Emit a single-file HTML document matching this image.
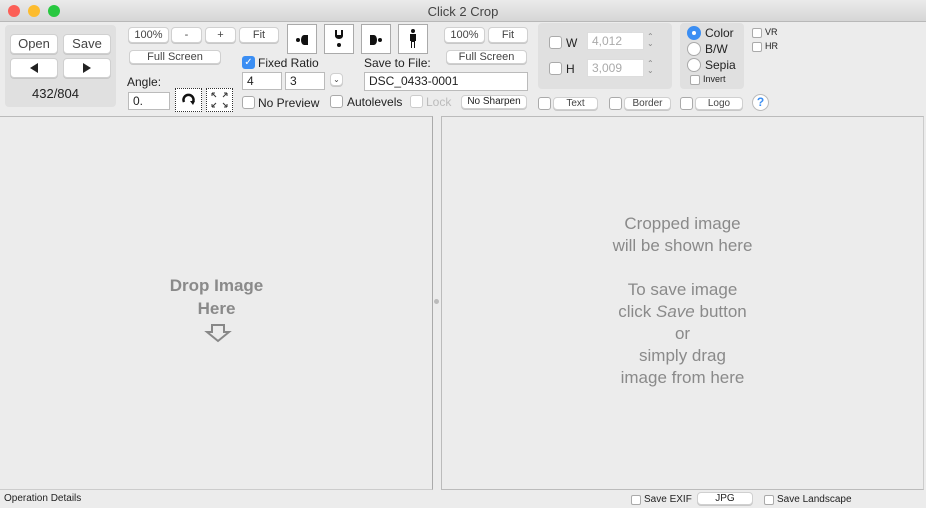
<!DOCTYPE html><html><head><style>
*{box-sizing:border-box;margin:0;padding:0}
body{width:926px;height:508px;background:#ececec;font-family:"Liberation Sans",sans-serif;position:relative;overflow:hidden;font-size:12px;color:#222}
.a{position:absolute}
.btn{position:absolute;background:#fff;border:1px solid #d0d0d0;border-radius:4px;box-shadow:0 1px 0 #c8c8c8;text-align:center;color:#444;font-size:11px}
.cb{position:absolute;width:13px;height:13px;border:1px solid #aaa;border-radius:3px;background:#fff}
.tf{position:absolute;background:#fff;border:1px solid #bbb;font-size:12px;padding-left:4px}
.grp{position:absolute;background:#e0e0e0;border-radius:4px}
.rd{position:absolute;width:14px;height:14px;border-radius:50%;border:1px solid #aaa;background:#fff}
.ico{position:absolute;width:30px;height:30px;background:#fff;border:1px solid #aaa}
.t{position:absolute;white-space:nowrap}
</style></head><body>
<div class="a" style="left:0;top:0;width:926px;height:22px;background:linear-gradient(#ebebeb,#d6d6d6);border-bottom:1px solid #b8b8b8"></div>
<div class="a" style="left:8px;top:5px;width:12px;height:12px;border-radius:50%;background:#fc5f57"></div>
<div class="a" style="left:28px;top:5px;width:12px;height:12px;border-radius:50%;background:#fdbc2e"></div>
<div class="a" style="left:48px;top:5px;width:12px;height:12px;border-radius:50%;background:#28c840"></div>
<div class="t" style="left:0;width:926px;top:4px;text-align:center;font-size:13px;color:#444">Click 2 Crop</div>

<div class="grp" style="left:5px;top:25px;width:111px;height:82px"></div>
<div class="btn" style="left:10px;top:34px;width:48px;height:20px;font-size:13px;line-height:18px">Open</div>
<div class="btn" style="left:63px;top:34px;width:48px;height:20px;font-size:13px;line-height:18px">Save</div>
<div class="btn" style="left:10px;top:58px;width:48px;height:20px;line-height:18px"><svg width="10" height="10" style="margin-top:4px"><path d="M1 5L9 0V10Z" fill="#222"/></svg></div>
<div class="btn" style="left:63px;top:58px;width:48px;height:20px;line-height:18px"><svg width="10" height="10" style="margin-top:4px"><path d="M9 5L1 0V10Z" fill="#222"/></svg></div>
<div class="t" style="left:32px;top:86px;font-size:13px">432/804</div>

<div class="btn" style="left:128px;top:27px;width:41px;height:16px;line-height:14px">100%</div>
<div class="btn" style="left:171px;top:27px;width:31px;height:16px;line-height:14px">-</div>
<div class="btn" style="left:205px;top:27px;width:31px;height:16px;line-height:14px">+</div>
<div class="btn" style="left:239px;top:27px;width:40px;height:16px;line-height:14px">Fit</div>
<div class="btn" style="left:129px;top:50px;width:92px;height:14px;line-height:12px">Full Screen</div>
<div class="t" style="left:127px;top:75px">Angle:</div>
<div class="tf" style="left:128px;top:92px;width:42px;height:18px;line-height:16px">0.</div>
<div class="a" style="left:175px;top:88px;width:27px;height:24px;border:1px dotted #333;background:#fff"><svg width="25" height="22"><path d="M8 13A5 5 0 1 1 17 13" fill="none" stroke="#111" stroke-width="2.5"/><path d="M14 12L19 12L17 16Z" fill="#111"/></svg></div>
<div class="a" style="left:206px;top:88px;width:27px;height:24px;border:1px dotted #333;background:#fff"><svg width="25" height="22" stroke="#333" stroke-width="1" fill="none"><path d="M5 4L9 8M5 4H8M5 4V7M20 4L16 8M20 4H17M20 4V7M5 18L9 14M5 18H8M5 18V15M20 18L16 14M20 18H17M20 18V15"/></svg></div>

<div class="ico" style="left:287px;top:24px"><svg width="28" height="28"><circle cx="10" cy="15" r="2" fill="#111"/><path d="M20 10H16A3 5 0 0 0 16 20H20Z" fill="#111"/></svg></div>
<div class="ico" style="left:324px;top:24px"><svg width="28" height="28"><path d="M10 5V11A4 3 0 0 0 18 11V5H16V10H12V5Z" fill="#111"/><circle cx="14" cy="20" r="2" fill="#111"/></svg></div>
<div class="ico" style="left:361px;top:24px"><svg width="28" height="28"><path d="M8 10H12A3 5 0 0 1 12 20H8Z" fill="#111"/><circle cx="18" cy="15" r="2" fill="#111"/></svg></div>
<div class="ico" style="left:398px;top:24px"><svg width="28" height="28"><circle cx="14" cy="6" r="2" fill="#111"/><path d="M11 9H17V16H16V23H15V17H13V23H12V16H11Z" fill="#111"/></svg></div>

<div class="cb" style="left:242px;top:56px;background:#3b8ef3;border-color:#3b8ef3;color:#fff;font-size:10px;line-height:11px;text-align:center">✓</div>
<div class="t" style="left:258px;top:56px">Fixed Ratio</div>
<div class="tf" style="left:242px;top:72px;width:40px;height:18px;line-height:16px">4</div>
<div class="tf" style="left:285px;top:72px;width:40px;height:18px;line-height:16px">3</div>
<div class="btn" style="left:330px;top:73px;width:13px;height:13px;font-size:8px;line-height:11px">⌄</div>
<div class="cb" style="left:242px;top:96px"></div>
<div class="t" style="left:258px;top:96px">No Preview</div>
<div class="cb" style="left:330px;top:95px"></div>
<div class="t" style="left:347px;top:95px">Autolevels</div>
<div class="cb" style="left:410px;top:95px;border-color:#ccc"></div>
<div class="t" style="left:426px;top:95px;color:#bbb">Lock</div>
<div class="btn" style="left:461px;top:95px;width:66px;height:14px;font-size:10px;line-height:12px;color:#222">No Sharpen</div>

<div class="t" style="left:364px;top:56px">Save to File:</div>
<div class="tf" style="left:364px;top:72px;width:164px;height:19px;line-height:17px">DSC_0433-0001</div>
<div class="btn" style="left:444px;top:27px;width:41px;height:16px;line-height:14px">100%</div>
<div class="btn" style="left:488px;top:27px;width:40px;height:16px;line-height:14px">Fit</div>
<div class="btn" style="left:446px;top:50px;width:81px;height:14px;line-height:12px">Full Screen</div>

<div class="grp" style="left:538px;top:23px;width:134px;height:66px"></div>
<div class="cb" style="left:549px;top:36px"></div><div class="t" style="left:566px;top:36px">W</div>
<div class="tf" style="left:587px;top:32px;width:57px;height:18px;line-height:16px;color:#aaa;border-color:#ddd">4,012</div>
<div class="t" style="left:647px;top:33px;font-size:8px;color:#888;line-height:7px">⌃<br>⌄</div>
<div class="cb" style="left:549px;top:62px"></div><div class="t" style="left:566px;top:62px">H</div>
<div class="tf" style="left:587px;top:59px;width:57px;height:18px;line-height:16px;color:#aaa;border-color:#ddd">3,009</div>
<div class="t" style="left:647px;top:60px;font-size:8px;color:#888;line-height:7px">⌃<br>⌄</div>

<div class="grp" style="left:680px;top:23px;width:64px;height:66px"></div>
<div class="rd" style="left:687px;top:26px;background:#3b8ef3;border-color:#3b8ef3"><div class="a" style="left:4px;top:4px;width:4px;height:4px;border-radius:50%;background:#fff"></div></div>
<div class="t" style="left:705px;top:26px">Color</div>
<div class="rd" style="left:687px;top:42px"></div><div class="t" style="left:705px;top:42px">B/W</div>
<div class="rd" style="left:687px;top:58px"></div><div class="t" style="left:705px;top:58px">Sepia</div>
<div class="cb" style="left:690px;top:75px;width:10px;height:10px;border-radius:2px"></div><div class="t" style="left:703px;top:74px;font-size:9px">Invert</div>
<div class="cb" style="left:752px;top:28px;width:10px;height:10px;border-radius:2px"></div><div class="t" style="left:765px;top:27px;font-size:9px">VR</div>
<div class="cb" style="left:752px;top:42px;width:10px;height:10px;border-radius:2px"></div><div class="t" style="left:765px;top:41px;font-size:9px">HR</div>

<div class="cb" style="left:538px;top:97px"></div><div class="btn" style="left:553px;top:97px;width:45px;height:13px;font-size:10px;line-height:11px">Text</div>
<div class="cb" style="left:609px;top:97px"></div><div class="btn" style="left:624px;top:97px;width:47px;height:13px;font-size:10px;line-height:11px">Border</div>
<div class="cb" style="left:680px;top:97px"></div><div class="btn" style="left:695px;top:97px;width:48px;height:13px;font-size:10px;line-height:11px">Logo</div>
<div class="a" style="left:752px;top:94px;width:17px;height:17px;border-radius:50%;background:#fff;border:1px solid #bbb;color:#3b8ef3;font-weight:bold;text-align:center;line-height:15px;font-size:12px">?</div>

<div class="a" style="left:0;top:116px;width:433px;height:374px;border-top:1px solid #bbb;border-right:1px solid #aaa;border-bottom:1px solid #ccc;background:#ececec"></div>
<div class="a" style="left:441px;top:116px;width:483px;height:374px;border:1px solid #bbb;border-right-color:#ccc;background:#ececec"></div>
<div class="a" style="left:434px;top:299px;width:5px;height:5px;border-radius:50%;background:#bbb"></div>
<div class="t" style="left:0;width:433px;top:274px;text-align:center;font-size:17px;font-weight:bold;color:#8a8a8a;line-height:23px">Drop Image<br>Here</div>
<svg class="a" style="left:204px;top:323px" width="28" height="20"><path d="M8 2H20V9H25L14 18L3 9H8Z" fill="none" stroke="#888" stroke-width="2"/></svg>
<div class="t" style="left:441px;width:483px;top:213px;text-align:center;font-size:17px;color:#8a8a8a;line-height:22px">Cropped image<br>will be shown here<br><br>To save image<br>click <i>Save</i> button<br>or<br>simply drag<br>image from here</div>

<div class="t" style="left:4px;top:493px;font-size:10px;color:#222">Operation Details</div>
<div class="cb" style="left:631px;top:495px;width:10px;height:10px;border-radius:2px"></div><div class="t" style="left:644px;top:494px;font-size:10px">Save EXIF</div>
<div class="btn" style="left:697px;top:492px;width:56px;height:13px;font-size:10px;line-height:11px;color:#222">JPG</div>
<div class="cb" style="left:764px;top:495px;width:10px;height:10px;border-radius:2px"></div><div class="t" style="left:777px;top:494px;font-size:10px">Save Landscape</div>
</body></html>
